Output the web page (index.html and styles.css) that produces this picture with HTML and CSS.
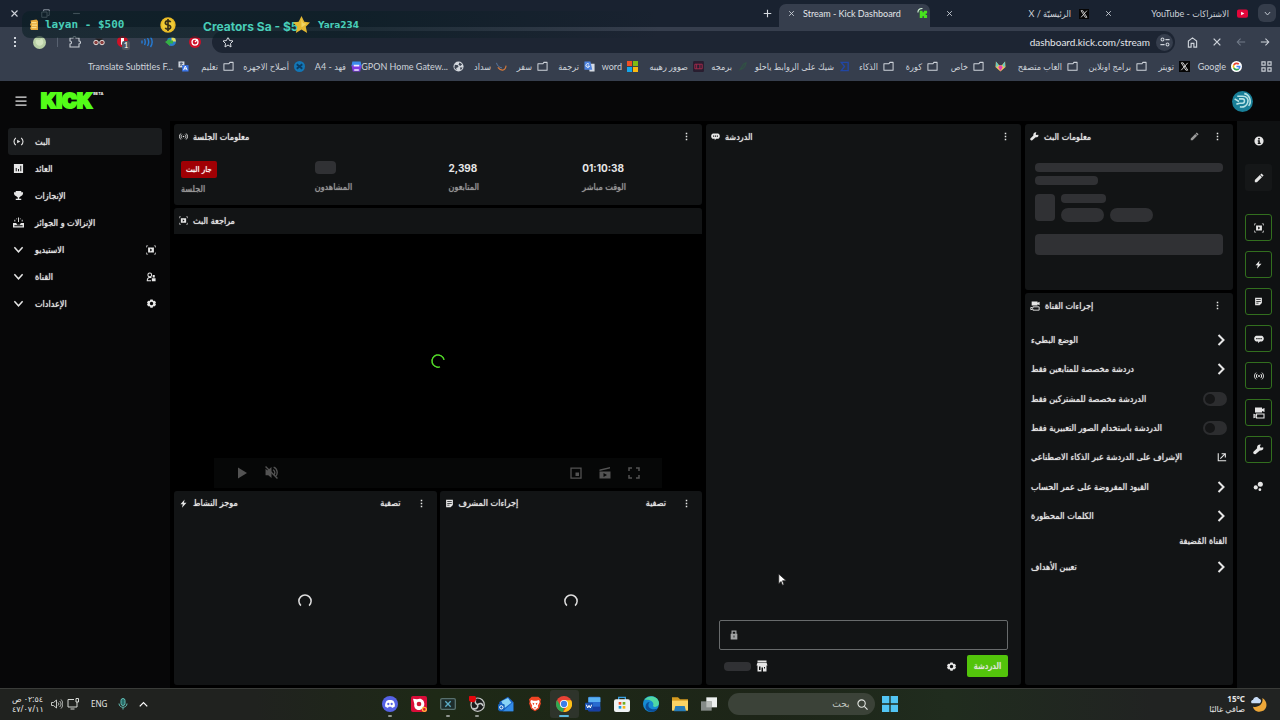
FILE: index.html
```html
<!DOCTYPE html>
<html lang="ar">
<head>
  <meta charset="UTF-8" />
  <meta name="viewport" content="width=device-width, initial-scale=1.0" />
  <title>Stream - Kick Dashboard</title>
  <link rel="stylesheet" href="styles.css">
</head>
<body>
  <svg class="sprite" aria-hidden="true">
    <symbol id="i-close" viewBox="0 0 24 24"><path d="M4 4l16 16M20 4L4 20" fill="none" stroke="currentColor" stroke-width="3"/></symbol>
    <symbol id="i-dots" viewBox="0 0 24 24"><path d="M10 2h4v4h-4zM10 10h4v4h-4zM10 18h4v4h-4z" fill="currentColor"/></symbol>
    <symbol id="i-folder" viewBox="0 0 24 24"><path d="M2 20V6h11l2-3h7v17z" fill="none" stroke="currentColor" stroke-width="2.2" stroke-linejoin="round"/></symbol>
    <symbol id="i-x" viewBox="0 0 24 24"><path d="M0 0h24v24H0z" fill="#050505"/><path d="M5 4h4l10 16h-4zM19 4L5 20" fill="none" stroke="#ddd" stroke-width="2"/></symbol>
    <symbol id="i-live" viewBox="0 0 24 24"><path d="M6 4c-5 5-5 11 0 16M18 4c5 5 5 11 0 16" fill="none" stroke="currentColor" stroke-width="2.5"/><path d="M9 8l7 4-7 4z" fill="currentColor"/></symbol>
    <symbol id="i-signal" viewBox="0 0 24 24"><path d="M5 4c-5 5-5 11 0 16M19 4c5 5 5 11 0 16M8 7c-3 3-3 7 0 10M16 7c3 3 3 7 0 10" fill="none" stroke="currentColor" stroke-width="2.4"/><circle cx="12" cy="12" r="2.2" fill="currentColor"/></symbol>
    <symbol id="i-chart" viewBox="0 0 24 24"><path fill="currentColor" fill-rule="evenodd" d="M2 2h20v20H2zM6 11v7h2v-7zM11 13v5h2v-5zM16 6v12h2V6z"/></symbol>
    <symbol id="i-trophy" viewBox="0 0 24 24"><path fill="currentColor" d="M6 2h12v3h4c0 6-2 8-5 8-1 2-2 3-3.500 3v3H18v3H6v-3h4.500v-3C9 16 8 15 7 13c-3 0-5-2-5-8h4z"/></symbol>
    <symbol id="i-drops" viewBox="0 0 24 24"><path fill="currentColor" fill-rule="evenodd" d="M0 13h7l2 4h6l2-4h7v10H0zM3 18v2h18v-2zM11 1h2v10h-2zM3 6h2v4H3zM19 6h2v4h-2zM7 3h2v2H7zM15 3h2v2h-2z"/></symbol>
    <symbol id="i-chev" viewBox="0 0 24 24"><path d="M3 7l9 10 9-10" fill="none" stroke="currentColor" stroke-width="3.200"/></symbol>
    <symbol id="i-next" viewBox="0 0 24 24"><path d="M7 2l10 10L7 22" fill="none" stroke="currentColor" stroke-width="4"/></symbol>
    <symbol id="i-studio" viewBox="0 0 24 24"><path d="M1 6V2h4M19 2h4v4M23 18v4h-4M5 22H1v-4" fill="none" stroke="currentColor" stroke-width="1.600"/><path fill="currentColor" fill-rule="evenodd" d="M5 6h14v12H5zM10 8.500v7l5-3.500z"/></symbol>
    <symbol id="i-people" viewBox="0 0 24 24"><path d="M13 13H9c-5 0-6 3-6 8h9" fill="none" stroke="currentColor" stroke-width="2.500"/><circle cx="9" cy="7" r="4.500" fill="none" stroke="currentColor" stroke-width="2.500"/><path fill="currentColor" d="M14 15h9v7h-9zM16 7h5v6h-5z"/></symbol>
    <symbol id="i-gear" viewBox="0 0 24 24"><path fill="currentColor" fill-rule="evenodd" d="M9 1h6l1 3 2 1 3-.5 3 5-2 2.500 2 2.500-3 5-3-.5-2 1-1 3H9l-1-3-2-1-3 .5-3-5L2 12 0 9.500l3-5L6 5l2-1zM12 7.500a4.500 4.500 0 100 9 4.500 4.500 0 000-9z"/></symbol>
    <symbol id="i-chat" viewBox="0 0 24 24"><path fill="currentColor" fill-rule="evenodd" d="M5 4h14c6 2 6 12 0 14h-5l-4 4v-4H5C-1 16-1 6 5 4zM5.500 9.500v3h3v-3zM10.500 9.500v3h3v-3zM15.500 9.500v3h3v-3z"/></symbol>
    <symbol id="i-wrench" viewBox="0 0 24 24"><path fill="currentColor" d="M22 7l-5 1-2-2 2-5c-5-1-9 3-8 8L1 17c-2 3 2 7 5 5l9-8c5 1 9-2 7-7z"/></symbol>
    <symbol id="i-pencil" viewBox="0 0 24 24"><path fill="currentColor" d="M2 22v-5L14 5l5 5L7 22zM15 4l3-3 5 5-3 3z"/></symbol>
    <symbol id="i-info" viewBox="0 0 24 24"><path fill="currentColor" fill-rule="evenodd" d="M12 1a11 11 0 100 22 11 11 0 000-22zM10 5h4v3.500h-4zM9 10h5v6h2v3H9v-3h1.500v-3H9z"/></symbol>
    <symbol id="i-bolt" viewBox="0 0 24 24"><path fill="currentColor" d="M15 1L4 14h6l-2 9 12-13h-7z"/></symbol>
    <symbol id="i-note" viewBox="0 0 24 24"><path fill="currentColor" fill-rule="evenodd" d="M3 2h18v14l-6 6H3zM6 6v2h12V6zM6 10.500v2h12v-2zM6 15v2h6v-2z"/></symbol>
    <symbol id="i-cams" viewBox="0 0 24 24"><path fill="currentColor" d="M4 1h14v3l5-2v8l-5-2v3H4z"/><path d="M7 14h15v8H7v-3l-5 2v-6l5 2z" fill="none" stroke="currentColor" stroke-width="2.200"/></symbol>
    <symbol id="i-nodes" viewBox="0 0 24 24"><circle cx="16" cy="7" r="5.500" fill="currentColor"/><circle cx="6" cy="14" r="4.500" fill="currentColor"/><circle cx="15" cy="19" r="3" fill="currentColor"/></symbol>
    <symbol id="i-out" viewBox="0 0 24 24"><path d="M3 3v18h19M8 16L20 4M11 4h9v9" fill="none" stroke="currentColor" stroke-width="2.600"/></symbol>
    <symbol id="i-translate" viewBox="0 0 24 24"><path fill="#d5dae2" d="M10 6h13v17H12z"/><path fill="#4d83e0" d="M1 1h13l4 18H1z"/><path d="M11 7a4 4 0 10 1 4H8" fill="none" stroke="#fff" stroke-width="2"/></symbol>
    <symbol id="i-spin" viewBox="0 0 24 24"><path d="M5 20a10.500 10.500 0 1114 0" fill="none" stroke="currentColor" stroke-width="2.600"/></symbol>
  </svg>

  <header class="browser">
    <div class="tabs">
      <div class="window-controls">
        <button aria-label="إغلاق"><svg class="i9"><use href="#i-close"/></svg></button>
        <button aria-label="استعادة"><svg class="i9" viewBox="0 0 24 24"><path d="M2 8h14v14H2zM7 7V2h15v15h-5" fill="none" stroke="#8e98a3" stroke-width="2.500"/></svg></button>
        <button aria-label="تصغير"><svg class="i9" viewBox="0 0 24 24"><path d="M3 12h18" stroke="#8e98a3" stroke-width="3"/></svg></button>
      </div>
      <button class="new-tab" aria-label="تبويب جديد"><svg class="i9" viewBox="0 0 24 24"><path d="M12 2v20M2 12h20" stroke="#d5dae0" stroke-width="3"/></svg></button>
      <div class="tab active">
        <svg class="i7"><use href="#i-close"/></svg>
        <span class="tab-title" dir="ltr">Stream - Kick Dashboard</span>
        <svg class="i11" viewBox="0 0 24 24"><path d="M2 10c0-5 4-9 10-9" fill="none" stroke="#cdeed0" stroke-width="2.500"/><path fill="#47e31d" d="M6 6h6v3h3V6h7v6h-3v3h3v7h-7v-4h-3v4H6z"/></svg>
      </div>
      <div class="tab">
        <svg class="i7"><use href="#i-close"/></svg>
        <span class="tab-title" dir="rtl">الرئيسيّة / X</span>
        <svg class="i10"><use href="#i-x"/></svg>
      </div>
      <div class="tab last">
        <svg class="i7"><use href="#i-close"/></svg>
        <span class="tab-title" dir="rtl">الاشتراكات - YouTube</span>
        <svg class="i11" viewBox="0 0 24 24"><rect y="3" width="24" height="18" rx="4" fill="#e3063a"/><path d="M9 8l7 4-7 4z" fill="#fff"/></svg>
      </div>
      <button class="tab-menu" aria-label="بحث في التبويبات"><svg class="i7"><use href="#i-chev"/></svg></button>
    </div>

    <div class="toolbar">
      <div class="extensions">
        <svg class="i12"><use href="#i-dots"/></svg>
        <svg class="i13" viewBox="0 0 24 24"><circle cx="12" cy="12" r="12" fill="#b9cfa6"/><path d="M5 8c3-4 6 2 9-2s5 3 5 6-4 7-8 6-7-5-6-10z" fill="#d3e4c0"/></svg>
        <span class="bar"></span>
        <svg class="i12" viewBox="0 0 24 24"><path d="M2 4h6c0-4 6-4 6 0h6v6c4 0 4 6 0 6v6H2v-6c4 0 4-6 0-6z" fill="none" stroke="#c9ced5" stroke-width="2.200"/></svg>
        <svg class="i12" viewBox="0 0 24 24"><path fill="#211e22" d="M5 5h14v5H5z"/><circle cx="6" cy="13" r="4.500" fill="#8b3d3d" stroke="#e2dcd8" stroke-width="2"/><circle cx="18" cy="13" r="4.500" fill="#8b3d3d" stroke="#e2dcd8" stroke-width="2"/></svg>
        <span class="badged">
          <svg class="i12" viewBox="0 0 24 24"><circle cx="11" cy="11" r="11" fill="#d01126"/><path fill="#fff" d="M8 4h6v10l-6 4z"/></svg>
          <span class="badge">1</span>
        </span>
        <svg class="i12" viewBox="0 0 24 24"><path d="M2 9v6M7 6c2 4 2 8 0 12M13 4c3 5 3 11 0 16M19 2c4 6 4 14 0 20" fill="none" stroke="#257bd4" stroke-width="2.800"/></svg>
        <svg class="i12" viewBox="0 0 24 24"><circle cx="13" cy="11" r="9" fill="#287dc9"/><path fill="#e5de60" d="M13 2a9 9 0 019 9h-9z"/><path fill="#35b043" d="M0 12l10-7v4h6v6h-6v5z"/></svg>
        <svg class="i12" viewBox="0 0 24 24"><circle cx="12" cy="12" r="12" fill="#cd1029"/><circle cx="12" cy="12" r="6" fill="none" stroke="#fff" stroke-width="2.500"/><path d="M12 12l5-5" stroke="#fff" stroke-width="2.500"/></svg>
      </div>
      <div class="omnibox">
        <svg class="i12" viewBox="0 0 24 24"><path d="M12 2l3 7 7 1-5 5 1 7-6-4-6 4 1-7-5-5 7-1z" fill="none" stroke="#dce0e5" stroke-width="2"/></svg>
        <input class="url" dir="ltr" aria-label="العنوان" value="dashboard.kick.com/stream">
        <span class="site-info"><svg class="i10" viewBox="0 0 24 24"><circle cx="6" cy="6" r="3.500" fill="none" stroke="currentColor" stroke-width="2.500"/><circle cx="18" cy="18" r="3.500" fill="none" stroke="currentColor" stroke-width="2.500"/><path d="M13 6h10M1 18h10" stroke="currentColor" stroke-width="3"/></svg></span>
      </div>
      <nav class="nav-buttons">
        <button aria-label="الصفحة الرئيسية"><svg class="i11" viewBox="0 0 24 24"><path d="M3 22V9l9-7 9 7v13h-6v-8H9v8z" fill="none" stroke="currentColor" stroke-width="2.500"/></svg></button>
        <button aria-label="إيقاف"><svg class="i10"><use href="#i-close"/></svg></button>
        <button aria-label="للأمام" class="dim"><svg class="i10" viewBox="0 0 24 24"><path d="M22 12H3M11 4l-8 8 8 8" fill="none" stroke="currentColor" stroke-width="2.500"/></svg></button>
        <button aria-label="رجوع"><svg class="i10" viewBox="0 0 24 24"><path d="M2 12h19M13 4l8 8-8 8" fill="none" stroke="currentColor" stroke-width="2.500"/></svg></button>
      </nav>
    </div>

    <nav class="bookmarks" dir="rtl">
      <span class="apps"><svg class="i11" viewBox="0 0 24 24"><path d="M2 2h7v7H2zM15 2h7v7h-7zM2 15h7v7H2zM15 15h7v7h-7z" fill="none" stroke="#c9ced5" stroke-width="2.500"/></svg></span>
      <a href="#"><svg class="i11" viewBox="0 0 24 24"><circle cx="12" cy="12" r="12" fill="#fff"/><g fill="none" stroke-width="3.500"><path d="M6 9a7 7 0 0111-2" stroke="#e94435"/><path d="M6 9a7 7 0 000 6" stroke="#f9bb05"/><path d="M6 15a7 7 0 0011 2" stroke="#34a753"/><path d="M17 17a7 7 0 002-5h-7" stroke="#4285f4"/></g></svg><span dir="ltr">Google</span></a>
      <a href="#"><svg class="i11"><use href="#i-x"/></svg><span>تويتر</span></a>
      <a href="#"><svg class="i11"><use href="#i-folder"/></svg><span>برامج اونلاين</span></a>
      <a href="#"><svg class="i11"><use href="#i-folder"/></svg><span>العاب متصفح</span></a>
      <a href="#" aria-label="متصفح"><svg class="i11" viewBox="0 0 24 24"><path fill="#f2c45b" d="M2 1l7 8h6l7-8 1 12-11 10L1 13z"/><path fill="#59cdd0" d="M2 1l6 8-5 5zM22 1l-6 8 5 5z"/><path fill="#e53bb4" d="M7 13l5-4 5 4-5 9z"/></svg></a>
      <a href="#"><svg class="i11"><use href="#i-folder"/></svg><span>خاص</span></a>
      <a href="#"><svg class="i11"><use href="#i-folder"/></svg><span>كورة</span></a>
      <a href="#"><svg class="i11"><use href="#i-folder"/></svg><span>الذكاء</span></a>
      <a href="#"><svg class="i11" viewBox="0 0 24 24"><path d="M20 3H5l7 9-7 9h15z" fill="none" stroke="#2146a4" stroke-width="3"/></svg><span>شيك على الروابط ياحلو</span></a>
      <a href="#"><svg class="i11" viewBox="0 0 24 24"><path d="M4 20c7 0 6-15 16-16-2 8-5 14-14 14" fill="none" stroke="#315144" stroke-width="2.500"/></svg><span>برمجه</span></a>
      <a href="#"><svg class="i11" viewBox="0 0 24 24"><rect width="24" height="24" rx="3" fill="#291e30"/><path d="M4 7h16v10H4zM8 7v10M15 7v10" fill="none" stroke="#a92b4d" stroke-width="2"/></svg><span>صوور رهيبه</span></a>
      <a href="#"><svg class="i11" viewBox="0 0 24 24"><path fill="#ef5125" d="M0 0h11v11H0z"/><path fill="#80bb13" d="M13 0h11v11H13z"/><path fill="#15a5ea" d="M0 13h11v11H0z"/><path fill="#fbb910" d="M13 13h11v11H13z"/></svg><span dir="ltr">word</span></a>
      <a href="#"><svg class="i11"><use href="#i-translate"/></svg><span>ترجمة</span></a>
      <a href="#"><svg class="i11"><use href="#i-folder"/></svg><span>سفر</span></a>
      <a href="#"><svg class="i11" viewBox="0 0 24 24"><path d="M1 4c2 7 6 10 12 11" fill="none" stroke="#5a7da8" stroke-width="2"/><path d="M4 14c6 8 16 9 18-4" fill="none" stroke="#d67a3b" stroke-width="2.500"/></svg><span>سداد</span></a>
      <a href="#"><svg class="i11" viewBox="0 0 24 24"><circle cx="12" cy="12" r="11" fill="#d4d8de"/><path fill="#3b4351" d="M4 8l7 1 1 4-5 2 1 5-5-5zM14 3l6 4-4 4-4-3zM15 14h6l-4 6z"/></svg><span dir="ltr">GPON Home Gatew...</span></a>
      <a href="#"><svg class="i11" viewBox="0 0 24 24"><path fill="#3b8bea" d="M3 1h18l2 10H1z"/><path fill="#7f3be0" d="M1 10h22l-3 13H4z"/><path fill="#f1eaff" d="M6 8h12v4H6zM7 18h10v3H7z"/></svg><span>فهد - A4</span></a>
      <a href="#"><svg class="i11" viewBox="0 0 24 24"><circle cx="12" cy="12" r="12" fill="#1376b5"/><path d="M6 7l12 10M18 7L6 17" stroke="#0b3b63" stroke-width="4"/></svg><span>أصلاح الاجهزه</span></a>
      <a href="#"><svg class="i11"><use href="#i-folder"/></svg><span>تعليم</span></a>
      <a href="#"><svg class="i11" viewBox="0 0 24 24"><path fill="#d5dae2" d="M1 1h13v13H1z"/><path fill="#3873e8" d="M9 9h14v14H9z"/><path d="M4 5h7M7 3v3c0 3-1 4-3 5M6 7l4 4" fill="none" stroke="#44516a" stroke-width="2"/><path d="M12 20l4-9 4 9M13 17h6" fill="none" stroke="#fff" stroke-width="2"/></svg><span dir="ltr">Translate Subtitles F...</span></a>
    </nav>
  </header>

  <!-- donations ticker over the window -->
  <div class="ticker" dir="ltr">
    <svg class="i12" viewBox="0 0 24 24"><path fill="#e4a93c" d="M5 3l12-2 3 3v18H6l-2-4 2-3-2-4 2-4z"/><path d="M7 7h10M8 12h10M7 17h10" stroke="#fadf89" stroke-width="2.500"/></svg>
    <span class="tick small">layan - $500</span>
    <svg class="coin" viewBox="0 0 24 24"><circle cx="12" cy="12" r="11.500" fill="#eabb26"/><circle cx="12" cy="12" r="9" fill="#f1cc38"/><path d="M16 8c-1-3-8-3-8 1s8 2 8 6-7 4-8 1M12 3v18" fill="none" stroke="#352d18" stroke-width="2.500"/></svg>
    <span class="tick big">Creators Sa - $5</span>
    <svg class="star" viewBox="0 0 24 24"><path fill="#e3b832" d="M12 0l4 8 8 1-6 6 2 9-8-5-8 5 2-9-6-6 8-1z"/><path fill="#f1d564" d="M12 4l2 6 5 1-4 3-3 2z"/></svg>
    <span class="tick name">Yara234</span>
  </div>

  <div class="kick-header">
    <button class="menu" aria-label="القائمة"><svg class="i12" viewBox="0 0 24 24"><path d="M1 4h22M1 12h22M1 20h22" stroke="currentColor" stroke-width="2.500"/></svg></button>
    <a class="logo" href="#">KICK<sup>BETA</sup></a>
    <svg class="avatar" viewBox="0 0 24 24"><circle cx="12" cy="12" r="12" fill="#197f98"/><path d="M6 6h6c5 0 7 3 6 7s-5 6-9 5M8 9h4c3 0 3 5 0 5H9M3 9l5 3M5 15l4-1M14 3c6 1 9 9 5 14" fill="none" stroke="#b5e2e5" stroke-width="1.800"/></svg>
  </div>

  <main class="app">
    <nav class="sidebar">
      <a class="active" href="#"><svg class="i11"><use href="#i-live"/></svg><span>البث</span></a>
      <a href="#"><svg class="i11"><use href="#i-chart"/></svg><span>العائد</span></a>
      <a href="#"><svg class="i11"><use href="#i-trophy"/></svg><span>الإنجازات</span></a>
      <a href="#"><svg class="i11"><use href="#i-drops"/></svg><span>الإنزالات و الجوائز</span></a>
      <a href="#"><svg class="i11"><use href="#i-chev"/></svg><span>الاستيديو</span><svg class="i10 end"><use href="#i-studio"/></svg></a>
      <a href="#"><svg class="i11"><use href="#i-chev"/></svg><span>القناة</span><svg class="i10 end"><use href="#i-people"/></svg></a>
      <a href="#"><svg class="i11"><use href="#i-chev"/></svg><span>الإعدادات</span><svg class="i9 end"><use href="#i-gear"/></svg></a>
    </nav>

    <div class="dashboard">
      <section class="panel session">
        <header class="panel-head">
          <svg class="i9"><use href="#i-signal"/></svg><h2>معلومات الجلسة</h2>
          <button class="push" aria-label="المزيد"><svg class="i9"><use href="#i-dots"/></svg></button>
        </header>
        <dl class="stats">
          <div><dd><span class="live">جار البث</span></dd><dt>الجلسة</dt></div>
          <div><dd><span class="skeleton viewers"></span></dd><dt>المشاهدون</dt></div>
          <div><dd>2,398</dd><dt>المتابعون</dt></div>
          <div><dd>01:10:38</dd><dt>الوقت مباشر</dt></div>
        </dl>
      </section>

      <section class="panel preview">
        <header class="panel-head">
          <svg class="i9"><use href="#i-studio"/></svg><h2>مراجعة البث</h2>
        </header>
        <div class="video">
          <svg class="spinner green"><use href="#i-spin"/></svg>
          <div class="controls">
            <button aria-label="تشغيل"><svg class="i12" viewBox="0 0 24 24"><path fill="currentColor" d="M4 1l18 11L4 23z"/></svg></button>
            <button aria-label="كتم الصوت"><svg class="i13" viewBox="0 0 24 24"><path fill="currentColor" d="M1 5l3 3h1l7-6v20l-6-5H1z"/><path d="M1 1l22 22M15 7c4 3 4 7 1 10M16 2c8 3 8 14 3 18" fill="none" stroke="currentColor" stroke-width="2.500"/></svg></button>
            <button class="push" aria-label="نافذة صغيرة"><svg class="i12" viewBox="0 0 24 24"><path d="M2 2h20v20H2z" fill="none" stroke="currentColor" stroke-width="2.500"/><path fill="currentColor" d="M11 11h7v7h-7z"/></svg></button>
            <button aria-label="مقطع"><svg class="i12" viewBox="0 0 24 24"><path fill="currentColor" fill-rule="evenodd" d="M1 9h22v14H1zM9 12v8l7-4zM1 5l21-5v3L1 8z"/></svg></button>
            <button aria-label="ملء الشاشة"><svg class="i12" viewBox="0 0 24 24"><path d="M2 8V2h6M16 2h6v6M22 16v6h-6M8 22H2v-6" fill="none" stroke="currentColor" stroke-width="3"/></svg></button>
          </div>
        </div>
      </section>

      <div class="feeds">
        <section class="panel feed">
          <header class="panel-head">
            <svg class="i9"><use href="#i-bolt"/></svg><h2>موجز النشاط</h2>
            <button class="push filter">تصفية</button>
            <button aria-label="المزيد"><svg class="i9"><use href="#i-dots"/></svg></button>
          </header>
          <div class="loading"><svg class="spinner"><use href="#i-spin"/></svg></div>
        </section>
        <section class="panel feed">
          <header class="panel-head">
            <svg class="i9"><use href="#i-note"/></svg><h2>إجراءات المشرف</h2>
            <button class="push filter">تصفية</button>
            <button aria-label="المزيد"><svg class="i9"><use href="#i-dots"/></svg></button>
          </header>
          <div class="loading"><svg class="spinner"><use href="#i-spin"/></svg></div>
        </section>
      </div>
    </div>

    <section class="panel chat">
      <header class="panel-head">
        <svg class="i9"><use href="#i-chat"/></svg><h2>الدردشة</h2>
        <button class="push" aria-label="المزيد"><svg class="i9"><use href="#i-dots"/></svg></button>
      </header>
      <div class="messages"></div>
      <div class="composer">
        <label class="chat-box">
          <svg class="i10" viewBox="0 0 24 24"><path fill="currentColor" fill-rule="evenodd" d="M4 9h2V1h12v8h2v14H4zM9 9h6V4H9zM11 13v5h2v-5z"/></svg>
          <input type="text" aria-label="رسالة">
        </label>
        <div class="chat-foot">
          <span class="skeleton points"></span>
          <svg class="i12" viewBox="0 0 24 24"><path fill="currentColor" fill-rule="evenodd" d="M3 1h18v3H3zM3 5h18l2 6h-2v12h-7v-8h-3v8H3V11H1zM6 13v7h3v-7zM16 14v3h2v-3z"/></svg>
          <button class="push" aria-label="إعدادات الدردشة"><svg class="i9"><use href="#i-gear"/></svg></button>
          <button class="send">الدردشة</button>
        </div>
      </div>
    </section>

    <div class="side-panels">
      <section class="panel stream-info">
        <header class="panel-head">
          <svg class="i9"><use href="#i-wrench"/></svg><h2>معلومات البث</h2>
          <button class="push edit" aria-label="تعديل"><svg class="i9"><use href="#i-pencil"/></svg></button>
          <button aria-label="المزيد"><svg class="i9"><use href="#i-dots"/></svg></button>
        </header>
        <div class="placeholder">
          <span class="skeleton line"></span>
          <span class="skeleton line short"></span>
          <div class="category">
            <span class="skeleton thumb"></span>
            <div>
              <span class="skeleton line name"></span>
              <div class="tags"><span class="skeleton tag"></span><span class="skeleton tag"></span></div>
            </div>
          </div>
          <span class="skeleton block"></span>
        </div>
      </section>

      <section class="panel actions">
        <header class="panel-head">
          <svg class="i10"><use href="#i-cams"/></svg><h2>إجراءات القناة</h2>
          <button class="push" aria-label="المزيد"><svg class="i9"><use href="#i-dots"/></svg></button>
        </header>
        <div class="action-list">
          <button class="row">الوضع البطيء<svg class="i12"><use href="#i-next"/></svg></button>
          <button class="row">دردشة مخصصة للمتابعين فقط<svg class="i12"><use href="#i-next"/></svg></button>
          <label class="row">الدردشة مخصصة للمشتركين فقط<input class="toggle" type="checkbox"></label>
          <label class="row">الدردشة باستخدام الصور التعبيرية فقط<input class="toggle" type="checkbox"></label>
          <a class="row" href="#">الإشراف على الدردشة عبر الذكاء الاصطناعي<svg class="i10"><use href="#i-out"/></svg></a>
          <button class="row">القيود المفروضة على عمر الحساب<svg class="i12"><use href="#i-next"/></svg></button>
          <button class="row">الكلمات المحظورة<svg class="i12"><use href="#i-next"/></svg></button>
        </div>
        <h3>القناة المُضيفة</h3>
        <button class="row">تعيين الأهداف<svg class="i12"><use href="#i-next"/></svg></button>
      </section>
    </div>

    <aside class="rail">
      <button aria-label="معلومات"><svg class="i10"><use href="#i-info"/></svg></button>
      <button class="edit-layout" aria-label="تعديل"><svg class="i10"><use href="#i-pencil"/></svg></button>
      <button class="on" aria-label="مراجعة البث"><svg class="i10"><use href="#i-studio"/></svg></button>
      <button class="on" aria-label="موجز النشاط"><svg class="i9"><use href="#i-bolt"/></svg></button>
      <button class="on" aria-label="إجراءات المشرف"><svg class="i9"><use href="#i-note"/></svg></button>
      <button class="on" aria-label="الدردشة"><svg class="i10"><use href="#i-chat"/></svg></button>
      <button class="on" aria-label="الجلسة"><svg class="i10"><use href="#i-signal"/></svg></button>
      <button class="on" aria-label="إجراءات القناة"><svg class="i12"><use href="#i-cams"/></svg></button>
      <button class="on" aria-label="معلومات البث"><svg class="i11"><use href="#i-wrench"/></svg></button>
      <button aria-label="المزيد"><svg class="i11"><use href="#i-nodes"/></svg></button>
    </aside>
  </main>

  <footer class="taskbar">
    <div class="tray">
      <div class="clock" dir="rtl"><span>٠٢:٥٤ ص</span><span>٤٧/٠٧/١١</span></div>
      <svg class="i12 speaker" viewBox="0 0 24 24"><path d="M1 9h4l6-5v16l-6-5H1zM14 9c2 2 2 4 0 6M17 6c4 4 4 8 0 12M20 3c5 6 5 12 0 18" fill="none" stroke="#d5d8d5" stroke-width="1.800"/></svg>
      <svg class="i12" viewBox="0 0 24 24"><path d="M14 3H2v15h18v-6M7 22h8M18 1h5v7h-5zM20 8v4" fill="none" stroke="#d5d8d5" stroke-width="2"/></svg>
      <span class="lang">ENG</span>
      <svg class="i12 mic" viewBox="0 0 24 24"><rect x="8" y="1" width="8" height="14" rx="4" fill="#276a66" stroke="#63bdb4" stroke-width="2"/><path d="M4 11c0 10 16 10 16 0M12 19v4" fill="none" stroke="#63bdb4" stroke-width="2"/></svg>
      <svg class="i9" viewBox="0 0 24 24"><path d="M2 17l10-10 10 10" fill="none" stroke="#fff" stroke-width="3.500"/></svg>
    </div>
    <div class="dock">
      <span class="app-icon run"><svg viewBox="0 0 24 24"><circle cx="12" cy="12" r="12" fill="#5562e4"/><path fill="#fff" d="M7 7l3-1h4l3 1c2 3 3 6 2 9l-4 2-1-2h-4l-1 2-4-2c-1-3 0-6 2-9z"/><circle cx="9.500" cy="12" r="1.700" fill="#5562e4"/><circle cx="14.500" cy="12" r="1.700" fill="#5562e4"/></svg></span>
      <span class="app-icon"><svg viewBox="0 0 24 24"><rect width="24" height="24" rx="3" fill="#d90d39"/><path fill="#fff" d="M3 4l6 1c6-3 11 1 11 7 0 5-4 9-8 9-5 0-8-4-7-9z"/><circle cx="12" cy="12" r="3.500" fill="#cb1735"/><circle cx="20" cy="20" r="3" fill="#d90d39" stroke="#ffba39" stroke-width="2"/></svg></span>
      <span class="app-icon run"><svg viewBox="0 0 24 24"><rect x="1" y="4" width="22" height="16" rx="2" fill="#1d2c2b" stroke="#58706e" stroke-width="2"/><path d="M8 8l8 8M16 8l-8 8" stroke="#5cabc5" stroke-width="2"/></svg></span>
      <span class="app-icon run"><svg viewBox="0 0 24 24"><circle cx="13" cy="13" r="10" fill="#191b1b" stroke="#c5c8c6" stroke-width="1.800"/><path d="M10 5c-2 4 0 7 3 8 4-3 7-2 8 2M13 13c1 5-2 7-7 6" fill="none" stroke="#c5c8c6" stroke-width="2.500"/><circle cx="5" cy="4" r="5.500" fill="#e3060c"/></svg></span>
      <span class="app-icon"><svg viewBox="0 0 24 24"><path fill="#1a63c5" d="M2 9L15 1l8 8v14H2z"/><path fill="#88d4f7" d="M5 8l10-5 5 7-10 8z"/><path fill="#338ce6" d="M23 9v14H7z"/><rect y="12" width="10" height="10" rx="2" fill="#1464be"/><circle cx="5" cy="17" r="2.500" fill="none" stroke="#fff" stroke-width="1.500"/></svg></span>
      <span class="app-icon"><svg viewBox="0 0 24 24"><path fill="#ef4423" d="M7 1h10l4 4-1 4 1 2-3 8-6 4-6-4-3-8 1-2-1-4z"/><path fill="#fff" d="M6 6l4 1h4l4-1 1 3-3 6 1 2-5 4-5-4 1-2-3-6z"/><path fill="#ef4423" d="M8 10l3 1-1 3zM16 10l-3 1 1 3zM10 17h4l-2 2z"/></svg></span>
      <span class="app-icon current"><svg viewBox="0 0 24 24"><circle cx="12" cy="12" r="12" fill="#e94235"/><path fill="#30a852" d="M1.600 6L7 15l5 3-1 6A12 12 0 011.600 6z"/><path fill="#fbc116" d="M12 6.500h10.700A12 12 0 0111 24l6-9z"/><circle cx="12" cy="12" r="6" fill="#fff"/><circle cx="12" cy="12" r="4.700" fill="#3c7ee8"/></svg></span>
      <span class="app-icon"><svg viewBox="0 0 24 24"><rect x="5" y="1" width="18" height="22" rx="2" fill="#286bd0"/><path fill="#59b1f2" d="M5 2h18v7H5z"/><path fill="#173fa4" d="M5 16h18v7H5z"/><rect y="10" width="12" height="11" rx="1" fill="#174faf"/><path d="M2 13l2 5 2-4 2 4 2-5" fill="none" stroke="#fff" stroke-width="1.500"/></svg></span>
      <span class="app-icon"><svg viewBox="0 0 24 24"><path d="M7 7V2h10v5" fill="none" stroke="#3ba1e2" stroke-width="2"/><rect y="5" width="24" height="19" rx="3" fill="#eff2f4"/><path fill="#ef5125" d="M7 9h4v4H7z"/><path fill="#71ae20" d="M13 9h4v4h-4z"/><path fill="#1699dc" d="M7 15h4v4H7z"/><path fill="#f7b616" d="M13 15h4v4h-4z"/></svg></span>
      <span class="app-icon"><svg viewBox="0 0 24 24"><circle cx="12" cy="12" r="12" fill="#168bd2"/><path fill="#50d9a4" d="M2 6C8-3 24 0 24 11c0 5-7 7-9 4 3-7-6-11-13-9z"/><path fill="#0b4e99" d="M10 9c-5 6 0 13 12 10-5 7-15 6-18-1-1-5 2-9 6-9z"/></svg></span>
      <span class="app-icon"><svg viewBox="0 0 24 24"><path fill="#d59a20" d="M0 2h9l3 3h12v6H0z"/><path fill="#fad364" d="M0 7h24v15H0z"/><path fill="#267bb7" d="M5 15h14l2 8H3z"/></svg></span>
      <span class="app-icon"><svg viewBox="0 0 24 24"><path fill="#edf0ef" d="M8 2h16v15H8z"/><path fill="#858b88" d="M0 8h16v14H0z"/><path fill="#b8bcb9" d="M8 8h8v9H8z"/></svg></span>
      <label class="search"><input type="search" dir="rtl" placeholder="بحث" aria-label="بحث"><svg class="i11" viewBox="0 0 24 24"><circle cx="10" cy="10" r="8" fill="none" stroke="#e2e5e1" stroke-width="2.400"/><path d="M16 16l7 7" stroke="#e2e5e1" stroke-width="2.500"/></svg></label>
      <span class="app-icon"><svg viewBox="0 0 24 24"><path fill="#52c5f4" d="M0 0h11v11H0zM13 0h11v11H13zM0 13h11v11H0zM13 13h11v11H13z"/></svg></span>
    </div>
    <div class="weather">
      <div class="forecast"><b>15°C</b><span dir="rtl">صافي غالبًا</span></div>
      <svg class="moon" viewBox="0 0 24 24"><path fill="#eca638" d="M17 3c8 4 9 17-1 20-7 2-12-2-13-7 8 2 16-4 14-13z"/><path fill="#c8dcf5" d="M1 11c-2-3 0-5 2-5 1-5 7-6 9-2 4 0 4 7 0 7z"/></svg>
    </div>
  </footer>

  <svg class="cursor" viewBox="0 0 12 18"><path d="M1 1v13l3-3 2 5 2-1-2-5h5z" fill="#fff" stroke="#222" stroke-width="1"/></svg>
</body>
</html>
```

FILE: styles.css
```css
* {
  box-sizing: border-box;
}
body {
  margin: 0;
  min-height: 100vh;
  display: flex;
  flex-direction: column;
  background: #000;
  color: #e6e6e6;
  font-family: Inter, "DejaVu Sans Condensed", "DejaVu Sans", sans-serif;
  font-size: 9px;
  line-height: 12px;
  position: relative;
  overflow: hidden;
}
button, input {
  font: inherit;
  color: inherit;
  text-shadow: inherit;
  background: none;
  border: none;
  padding: 0;
  margin: 0;
}
button {
  display: flex;
  align-items: center;
  justify-content: center;
}
a {
  color: inherit;
  text-decoration: none;
}
h2, h3, dl, dd, dt {
  margin: 0;
}
svg {
  display: block;
  flex: none;
}
.sprite {
  position: absolute;
  width: 0;
  height: 0;
}
.i7 { width: 7px; height: 7px; }
.i9 { width: 9px; height: 9px; }
.i10 { width: 10px; height: 10px; }
.i11 { width: 11px; height: 11px; }
.i12 { width: 12px; height: 12px; }
.i13 { width: 13px; height: 13px; }
.push {
  margin-left: auto;
}

/* browser */
.browser {
  background: #363e4d;
  color: #ced3da;
  font-family: Lato, "DejaVu Sans Condensed", "DejaVu Sans", sans-serif;
}
.tabs {
  display: flex;
  height: 27px;
  background: #192230;
}
.window-controls {
  display: flex;
  align-items: center;
  gap: 22px;
  padding-left: 10px;
  margin-right: auto;
}
.new-tab {
  width: 24px;
}
.tab {
  display: flex;
  align-items: center;
  gap: 8px;
  width: 166px;
  padding: 0 7px 0 16px;
}
.tab .tab-title {
  margin-left: auto;
  white-space: nowrap;
}
.tab.active {
  width: 151px;
  margin-top: 4px;
  padding: 0 2px 4px 9px;
  background: #363e4d;
  border-radius: 7px 7px 0 0;
}
.tab.active .tab-title {
  margin: 0 auto 0 0;
  color: #e2e5e9;
}
.tab.last {
  width: 152px;
  padding: 0 0 0 9px;
}
.tab-menu {
  width: 18px;
  height: 18px;
  margin: 4px 4px 0 10px;
  border-radius: 6px;
  background: #353d4b;
}
.toolbar {
  display: flex;
  align-items: center;
  height: 30px;
}
.extensions {
  display: flex;
  align-items: center;
  gap: 12px;
  padding-left: 9px;
  width: 212px;
}
.bar {
  width: 1px;
  height: 10px;
  margin: 0 -1px;
  background: #586170;
}
.badged {
  position: relative;
}
.badge {
  position: absolute;
  left: 5px;
  top: 5px;
  width: 8px;
  height: 9px;
  border-radius: 2px;
  background: #50565f;
  color: #fff;
  font-size: 8px;
  line-height: 9px;
  text-align: center;
}
.omnibox {
  flex: 1;
  display: flex;
  align-items: center;
  height: 22px;
  padding: 0 2px 0 10px;
  border-radius: 11px;
  background: #1d2533;
}
.url {
  flex: 1;
  min-width: 0;
  padding-right: 6px;
  text-align: right;
  font-size: 10px;
  color: #e4e7eb;
}
.site-info {
  display: grid;
  place-items: center;
  width: 17px;
  height: 17px;
  border-radius: 50%;
  background: #363e4d;
}
.nav-buttons {
  display: flex;
  gap: 14px;
  padding: 0 10px 0 12px;
}
.dim {
  color: #727b89;
}
.bookmarks {
  display: grid;
  grid-template-columns: 30fr 52fr 43fr 69fr 72fr 22fr 46fr 44fr 44fr 102fr 44fr 66fr 43fr 47fr 41fr 43fr 102fr 57fr 71fr 45fr 93fr;
  align-items: center;
  height: 24px;
  padding: 0 8px 5px 96px;
}
.bookmarks a {
  display: flex;
  align-items: center;
  gap: 5px;
  min-width: 0;
  white-space: nowrap;
}

/* donations ticker */
.ticker {
  position: absolute;
  left: 22px;
  top: 11px;
  display: flex;
  align-items: center;
  width: 640px;
  height: 27px;
  padding-left: 6px;
  border-radius: 8px;
  background: linear-gradient(90deg, rgba(10, 30, 36, 0.6) 50%, rgba(10, 30, 36, 0));
  color: #48cdb8;
  font-family: "DejaVu Sans", sans-serif;
  font-weight: bold;
}
.tick {
  white-space: nowrap;
}
.tick.small {
  width: 120px;
  padding-left: 5px;
  font-family: "DejaVu Sans Mono", monospace;
  font-size: 11px;
}
.tick.big {
  width: 90px;
  margin-left: 27px;
  padding-top: 4px;
  font-family: Inter, sans-serif;
  font-size: 12px;
}
.tick.name {
  padding-left: 8px;
  font-size: 9px;
}
.coin {
  width: 16px;
  height: 16px;
}
.star {
  width: 17px;
  height: 17px;
}

/* kick */
.kick-header {
  display: flex;
  align-items: center;
  height: 40px;
  padding: 0 27px 0 15px;
  background: #070708;
}
.logo {
  display: flex;
  align-items: flex-start;
  margin-left: 14px;
  color: #53fc18;
  font-size: 20px;
  font-weight: 900;
  line-height: 20px;
  -webkit-text-stroke: 2px #53fc18;
}
.logo sup {
  padding-left: 1px;
  color: #fff;
  font-size: 4px;
  font-weight: bold;
  line-height: 6px;
  -webkit-text-stroke: 0;
}
.avatar {
  width: 21px;
  height: 21px;
  margin-left: auto;
}
.app {
  flex: 1;
  display: grid;
  grid-template-columns: 170px 528fr 315fr 208fr 43px;
  column-gap: 4px;
  min-height: 0;
  text-shadow: 0 0 1px currentColor;
}
.sidebar {
  display: grid;
  grid-auto-rows: 27px;
  align-content: start;
  padding: 7px 8px;
  background: #070708;
}
.sidebar a {
  display: flex;
  align-items: center;
  padding: 0 6px 0 5px;
  border-radius: 3px;
}
.sidebar a.active {
  background: #1a1c1e;
}
.sidebar span {
  padding-left: 11px;
  white-space: nowrap;
}
.end {
  margin-left: auto;
}
.panel {
  display: flex;
  flex-direction: column;
  min-width: 0;
  background: #121415;
  border-radius: 3px;
}
.panel-head {
  display: flex;
  align-items: center;
  gap: 5px;
  height: 26px;
  padding: 0 11px 1px 5px;
}
.panel-head h2 {
  font-size: 9px;
  font-weight: normal;
  white-space: nowrap;
}
.dashboard {
  display: flex;
  flex-direction: column;
  gap: 3px;
  padding: 3px 0;
}
.session {
  height: 81px;
}
.stats {
  display: grid;
  grid-template-columns: repeat(4, 1fr);
  padding: 9px 0 0 7px;
  margin-right: -14px;
}
.stats dd {
  display: flex;
  align-items: center;
  min-height: 17px;
  font-size: 10px;
  font-weight: bold;
  text-shadow: none;
}
.stats dt {
  padding-top: 5px;
  color: #999;
}
.live {
  margin-top: 2px;
  padding: 2px 5px 3px;
  border-radius: 2px;
  background: #a00004;
  font-size: 8px;
  font-weight: normal;
  text-shadow: 0 0 1px currentColor;
  color: #fff;
}
.skeleton {
  display: block;
  background: #303134;
  border-radius: 4px;
}
.viewers {
  width: 21px;
  height: 13px;
}
.preview {
  flex: 281;
}
.video {
  flex: 1;
  position: relative;
  display: grid;
  place-items: center;
  background: #000;
}
.spinner {
  width: 14px;
  height: 14px;
  color: #ddd;
}
.spinner.green {
  color: #53dc28;
  transform: rotate(-60deg);
}
.controls {
  position: absolute;
  left: 40px;
  right: 40px;
  bottom: 0;
  display: flex;
  align-items: center;
  gap: 17px;
  height: 30px;
  padding: 0 22px;
  background: #060707;
  color: #535353;
}
.controls .push {
  margin-left: auto;
}
.feeds {
  flex: 195;
  display: grid;
  grid-template-columns: 1fr 1fr;
  gap: 3px;
}
.filter {
  margin-right: 11px;
}
.loading {
  flex: 1;
  display: grid;
  place-items: center;
}
.chat, .side-panels {
  margin: 3px 0;
}
.messages {
  flex: 1;
}
.composer {
  padding: 0 13px 8px;
}
.chat-box {
  display: flex;
  align-items: center;
  height: 30px;
  padding: 0 9px;
  border: 1px solid #686b6c;
  border-radius: 2px;
  color: #a2a4a5;
}
.chat-box input {
  flex: 1;
}
.chat-foot {
  display: flex;
  align-items: center;
  gap: 5px;
  padding: 5px 0 0 5px;
}
.points {
  width: 27px;
  height: 9px;
}
.send {
  width: 41px;
  height: 22px;
  margin-left: 6px;
  border-radius: 2px;
  background: #53c40b;
}
.side-panels {
  display: flex;
  flex-direction: column;
  gap: 3px;
  min-width: 0;
}
.stream-info {
  height: 166px;
}
.edit {
  margin-right: 9px;
  color: #999;
}
.placeholder {
  display: flex;
  flex-direction: column;
  gap: 4px;
  padding: 13px 10px;
}
.line {
  height: 9px;
}
.short {
  width: 63px;
}
.category {
  display: flex;
  gap: 6px;
  padding: 5px 0 8px;
}
.thumb {
  width: 20px;
  height: 27px;
}
.name {
  width: 45px;
}
.tags {
  display: flex;
  gap: 6px;
  padding-top: 5px;
}
.tag {
  width: 43px;
  height: 14px;
  border-radius: 7px;
}
.block {
  height: 21px;
}
.actions {
  flex: 1;
}
.action-list {
  display: grid;
  grid-template-columns: minmax(0, 1fr);
  grid-auto-rows: 1fr;
  height: 206px;
  margin-top: 6px;
}
.row {
  display: flex;
  align-items: center;
  justify-content: space-between;
  width: 100%;
  padding: 0 6px;
  white-space: nowrap;
}
.actions > .row {
  height: 30px;
  margin-top: 5px;
}
.actions h3 {
  padding: 4px 6px 0;
  text-align: right;
  font-size: 9px;
  font-weight: normal;
}
.toggle {
  appearance: none;
  width: 24px;
  height: 14px;
  padding: 2px;
  border-radius: 7px;
  background: #2c2d2f;
}
.toggle::before {
  content: "";
  display: block;
  width: 10px;
  height: 10px;
  border-radius: 50%;
  background: #151617;
}
.toggle:checked::before {
  margin-left: auto;
  background: #53fc18;
}
.rail {
  display: flex;
  flex-direction: column;
  align-items: center;
  gap: 10px;
  padding-top: 6px;
  background: #0f1112;
}
.rail button {
  width: 27px;
  height: 27px;
  border-radius: 3px;
}
.rail .edit-layout {
  margin-bottom: 13px;
  background: #151718;
}
.rail .on {
  border: 1px solid #326f1e;
}

/* taskbar */
.taskbar {
  display: grid;
  grid-template-columns: 1fr auto 1fr;
  align-items: center;
  height: 32px;
  padding-bottom: 1px;
  border-top: 1px solid #3a3c39;
  background: linear-gradient(90deg, #20221f 20%, #1e2916 34%, #1d2518 60%, #202c1e 74%, #212322 90%);
  font-family: "Noto Sans", "DejaVu Sans", sans-serif;
}
.tray {
  display: flex;
  align-items: center;
  padding-left: 12px;
  gap: 4px;
}
.clock, .forecast {
  display: flex;
  flex-direction: column;
  font-size: 8px;
  line-height: 10px;
}
.clock {
  width: 30px;
  margin-right: 5px;
  align-items: flex-end;
  white-space: nowrap;
}
.lang {
  margin: 0 6px 0 8px;
  font-size: 8px;
}
.mic {
  margin-right: 6px;
}
.dock {
  display: flex;
  align-items: center;
}
.app-icon {
  position: relative;
  display: grid;
  place-items: center;
  width: 29px;
  height: 28px;
}
.app-icon svg {
  width: 16px;
  height: 16px;
}
.app-icon.run::after, .app-icon.current::after {
  content: "";
  position: absolute;
  bottom: 1px;
  left: 50%;
  width: 4px;
  height: 2px;
  margin-left: -2px;
  border-radius: 1px;
  background: #919790;
}
.app-icon.current {
  background: #2e342b;
  border-radius: 3px;
}
.app-icon.current::after {
  width: 10px;
  margin-left: -5px;
  background: #5cb9df;
}
.search {
  display: flex;
  align-items: center;
  gap: 7px;
  width: 147px;
  height: 22px;
  margin: 0 1px 0 4px;
  padding: 0 7px;
  border-radius: 11px;
  background: #3b4238;
}
.search input {
  flex: 1;
  min-width: 0;
}
.search input::placeholder {
  color: #c4c8c1;
}
.weather {
  display: flex;
  align-items: center;
  justify-content: flex-end;
  gap: 6px;
  padding-right: 13px;
}
.forecast {
  align-items: flex-end;
}
.moon {
  width: 16px;
  height: 16px;
}
.cursor {
  position: absolute;
  left: 778px;
  top: 573px;
  width: 9px;
  height: 14px;
}
```
